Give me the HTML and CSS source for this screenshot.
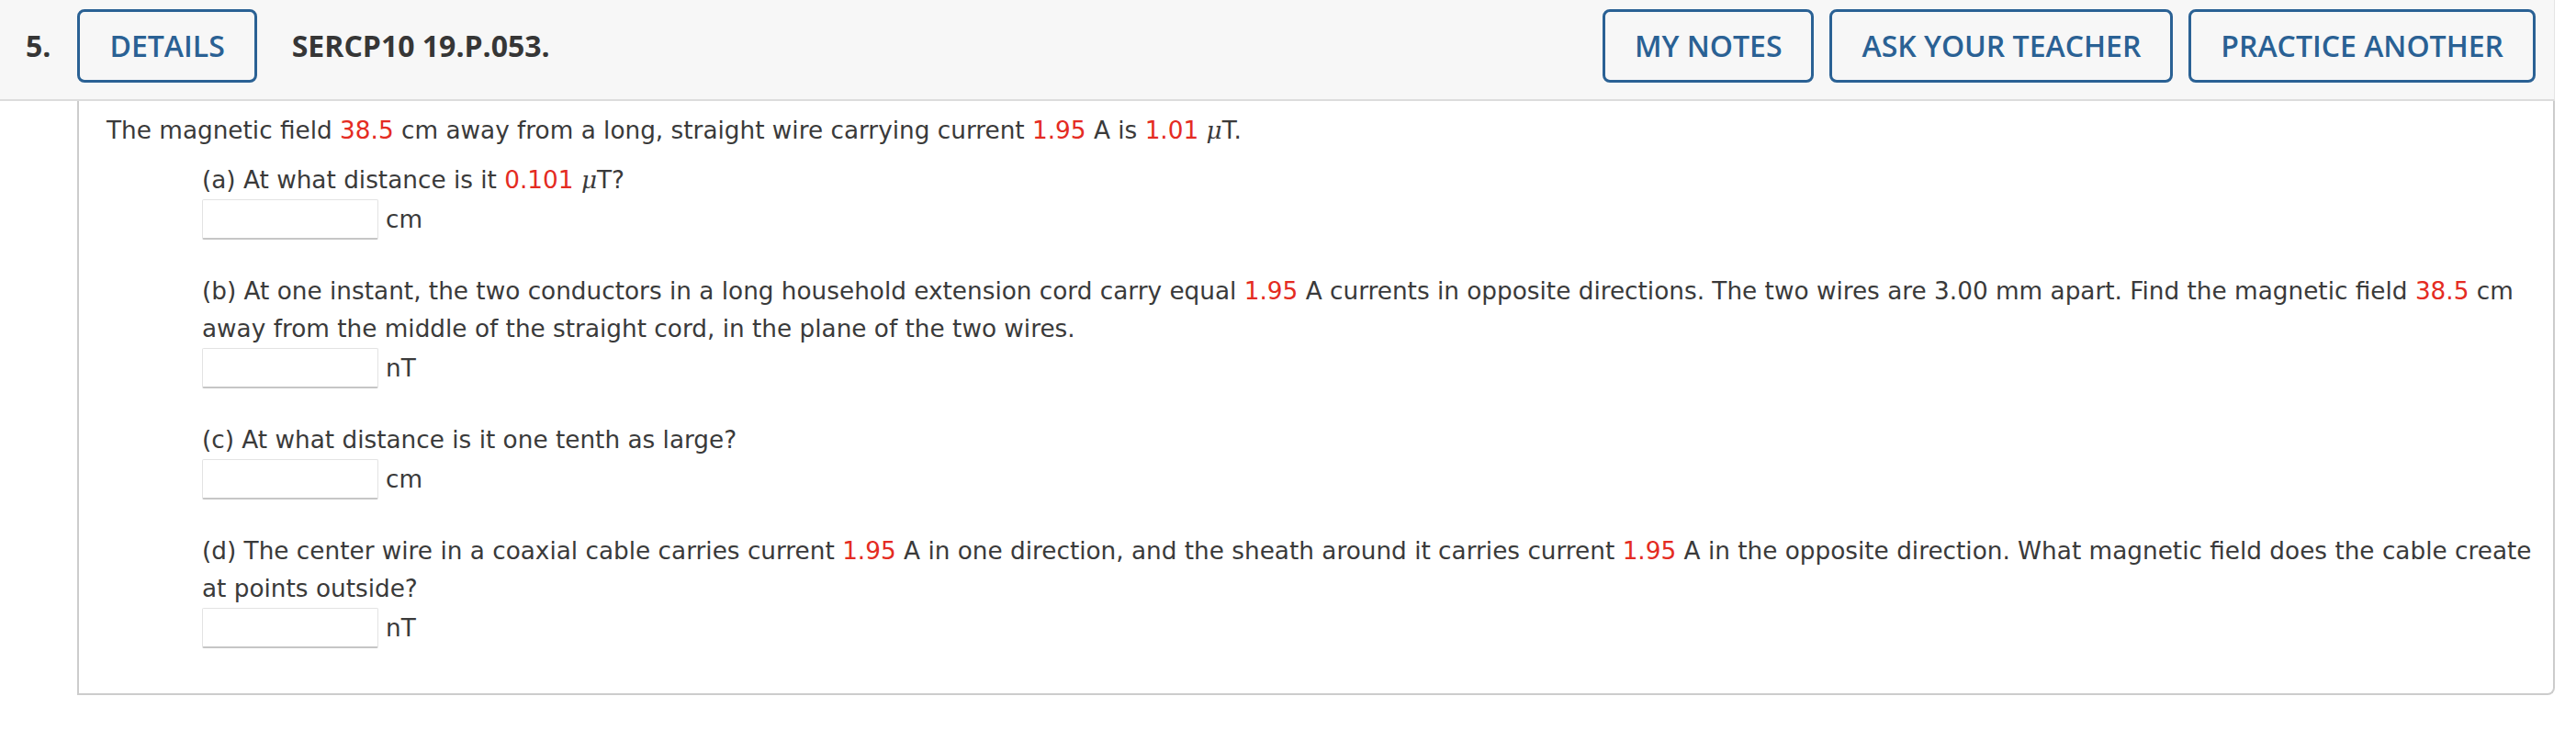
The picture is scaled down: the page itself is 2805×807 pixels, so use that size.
FILE: index.html
```html
<!DOCTYPE html>
<html lang="en">
<head>
<meta charset="utf-8">
<title>SERCP10 19.P.053.</title>
<link rel="stylesheet" href="styles.css">
</head>
<body>
<div class="question">
  <div class="q-header">
    <span class="q-num">5.</span>
    <button class="btn">DETAILS</button>
    <span class="q-code">SERCP10 19.P.053.</span>
    <div class="q-actions">
      <button class="btn">MY NOTES</button>
      <button class="btn">ASK YOUR TEACHER</button>
      <button class="btn">PRACTICE ANOTHER</button>
    </div>
  </div>
  <div class="q-body">
    <p class="intro">The magnetic field <span class="val">38.5</span> cm away from a long, straight wire carrying current <span class="val">1.95</span> A is <span class="val">1.01</span> <i class="mu">μ</i>T.</p>
    <div class="part">
      <p class="part-text">(a) At what distance is it <span class="val">0.101</span> <i class="mu">μ</i>T?</p>
      <div class="answer"><span class="field"></span><span class="unit">cm</span></div>
    </div>
    <div class="part">
      <p class="part-text">(b) At one instant, the two conductors in a long household extension cord carry equal <span class="val">1.95</span> A currents in opposite directions. The two wires are 3.00 mm apart. Find the magnetic field <span class="val">38.5</span> cm away from the middle of the straight cord, in the plane of the two wires.</p>
      <div class="answer"><span class="field"></span><span class="unit">nT</span></div>
    </div>
    <div class="part">
      <p class="part-text">(c) At what distance is it one tenth as large?</p>
      <div class="answer"><span class="field"></span><span class="unit">cm</span></div>
    </div>
    <div class="part">
      <p class="part-text">(d) The center wire in a coaxial cable carries current <span class="val">1.95</span> A in one direction, and the sheath around it carries current <span class="val">1.95</span> A in the opposite direction. What magnetic field does the cable create at points outside?</p>
      <div class="answer"><span class="field"></span><span class="unit">nT</span></div>
    </div>
  </div>
</div>
</body>
</html>
```

FILE: styles.css
```css
html, body {
  margin: 0;
  padding: 0;
  background: #ffffff;
}

.question {
  width: 2782px;
}

.q-header {
  box-sizing: border-box;
  height: 110px;
  background: #f7f7f7;
  border-bottom: 2px solid #dcdcdc;
  border-right: 1px solid #e4e4e4;
  display: flex;
  align-items: flex-start;
  padding: 10px 20px 0 28px;
  font-family: "Open Sans", "Liberation Sans", sans-serif;
}

.q-num,
.q-code {
  font-size: 32px;
  font-weight: 700;
  color: #363636;
  line-height: 80px;
}

.q-num {
  margin-right: 29px;
}

.q-code {
  margin-left: 38px;
}

.btn {
  box-sizing: border-box;
  height: 80px;
  padding: 0 32px;
  border: 3px solid #2a6194;
  border-radius: 8px;
  background: transparent;
  color: #2a6194;
  font-family: "Open Sans", "Liberation Sans", sans-serif;
  font-size: 32px;
  font-weight: 600;
  line-height: 1;
}

.q-actions {
  margin-left: auto;
  display: flex;
  gap: 17px;
}

.q-body {
  box-sizing: border-box;
  margin-left: 84px;
  border: 2px solid #cccccc;
  border-top: 0;
  border-radius: 0 0 8px 0;
  padding: 12px 12px 49px 30px;
  font-family: "DejaVu Sans", Verdana, sans-serif;
  font-size: 26.3px;
  line-height: 41px;
  color: #3a3a3a;
}

.q-body p {
  margin: 0;
}

.val {
  color: #e42b22;
}

.mu {
  font-family: "DejaVu Serif", "Liberation Serif", serif;
  font-style: italic;
}

.part {
  margin-left: 104px;
  margin-top: 36px;
}

.intro + .part {
  margin-top: 13px;
}

.answer {
  display: flex;
  align-items: center;
  gap: 8px;
}

.field {
  box-sizing: border-box;
  width: 192px;
  height: 44px;
  background: #ffffff;
  border: 1px solid #e3e3e3;
  border-bottom: 2px solid #c6c6c6;
  border-radius: 2px;
}
```
